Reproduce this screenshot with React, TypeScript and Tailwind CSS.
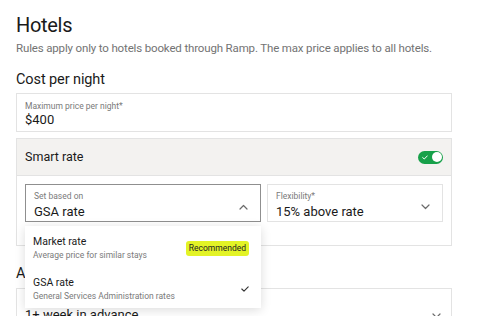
import React from "react";

const Chevron = ({ up = false }: { up?: boolean }) => (
  <svg width="9" height="6" viewBox="0 0 9 6" fill="none" className="text-[#6b6b6b]">
    <path
      d={up ? "M1 5 L4.5 1.5 L8 5" : "M1 1 L4.5 4.5 L8 1"}
      stroke="currentColor"
      strokeWidth="1.2"
      strokeLinecap="round"
      strokeLinejoin="round"
    />
  </svg>
);

const Check = () => (
  <svg width="8" height="6" viewBox="0 0 8 6" fill="none">
    <path d="M0.8 3 L3 5.2 L7.2 0.8" stroke="#333" strokeWidth="1.1" strokeLinecap="round" strokeLinejoin="round" />
  </svg>
);

export default function App() {
  return (
    <div className="w-[480px] h-[316px] overflow-hidden bg-white font-['Roboto',sans-serif] text-[#1a1a1a]">
      <div className="pl-4 pr-[28px] pt-[13px]">
        <h1 className="text-[20px] leading-6 font-normal tracking-[-0.3px]">Hotels</h1>
        <p className="mt-[3px] text-[11.5px] leading-4 text-[#737373] tracking-[-0.15px] whitespace-nowrap">
          Rules apply only to hotels booked through Ramp. The max price applies to all hotels.
        </p>
        <h2 className="mt-[14px] text-[14.5px] leading-5 tracking-[-0.1px]">Cost per night</h2>

        {/* max price */}
        <div className="mt-[3px] h-[39px] border border-[#e3e3e3] px-[8px] pt-[6px]">
          <div className="text-[8.5px] leading-3 text-[#7a7a7a]">Maximum price per night*</div>
          <div className="text-[13px] leading-4">$400</div>
        </div>

        {/* smart rate */}
        <div className="mt-[6px] border border-[#e3e3e3]">
          <div className="h-[37px] bg-[#f3f2f0] border-b border-[#e3e3e3] flex items-center justify-between pl-[8px] pr-[8px]">
            <span className="text-[12.5px]">Smart rate</span>
            <div className="w-[25px] h-[13px] rounded-full bg-[#17a14a] flex items-center justify-between pl-[4px] pr-[1.5px]">
              <svg width="6" height="5" viewBox="0 0 6 5" fill="none">
                <path d="M0.7 2.6 L2.3 4 L5.3 0.9" stroke="white" strokeWidth="1" strokeLinecap="round" strokeLinejoin="round" />
              </svg>
              <div className="w-[10px] h-[10px] rounded-full bg-white" />
            </div>
          </div>
          <div className="flex gap-[6px] pl-[8px] pr-[8px] pt-[8px] pb-[23px]">
            <div className="relative w-[236px]">
              <div className="h-[38px] border border-[#8f8f8f] px-[8px] pt-[5px] flex items-start justify-between">
                <div>
                  <div className="text-[8.5px] leading-3 text-[#7a7a7a]">Set based on</div>
                  <div className="text-[13px] leading-4 mt-[2px]">GSA rate</div>
                </div>
                <div className="pt-[14px] pr-[4px]">
                  <Chevron up />
                </div>
              </div>
              {/* dropdown */}
              <div className="absolute left-0 top-[42px] w-[236px] h-[82px] pt-[3px] bg-white shadow-[0_2px_10px_rgba(0,0,0,0.14)] z-10 flex flex-col gap-[2px]">
                <div className="flex items-center justify-between pl-[8px] pr-[12px] h-[39px]">
                  <div>
                    <div className="text-[10.5px] leading-[14px]">Market rate</div>
                    <div className="text-[8.5px] leading-3 text-[#7a7a7a]">Average price for similar stays</div>
                  </div>
                  <span className="bg-[#e3f326] rounded-[3px] px-[3px] h-[15px] flex items-center text-[8.5px] text-[#222]">
                    Recommended
                  </span>
                </div>
                <div className="flex items-center justify-between pl-[8px] pr-[12px] h-[39px]">
                  <div>
                    <div className="text-[10.5px] leading-[14px]">GSA rate</div>
                    <div className="text-[8.5px] leading-3 text-[#7a7a7a]">General Services Administration rates</div>
                  </div>
                  <Check />
                </div>
              </div>
            </div>
            <div className="flex-1 h-[38px] border border-[#e3e3e3] px-[8px] pt-[5px] flex items-start justify-between">
              <div>
                <div className="text-[8.5px] leading-3 text-[#7a7a7a]">Flexibility*</div>
                <div className="text-[13px] leading-4 mt-[2px]">15% above rate</div>
              </div>
              <div className="pt-[14px] pr-[4px]">
                <Chevron />
              </div>
            </div>
          </div>
        </div>

        <h2 className="mt-[18px] text-[14.5px] leading-5 tracking-[-0.1px]">Advance booking</h2>
        <div className="mt-[4px] h-[39px] border border-[#e3e3e3] pl-[8px] pr-[10px] pt-[5px] flex items-start justify-between">
          <div>
            <div className="text-[8.5px] leading-3 text-[#7a7a7a]">Book at least*</div>
            <div className="text-[13px] leading-4 mt-[1px]">1+ week in advance</div>
          </div>
          <div className="pt-[19px]">
            <Chevron />
          </div>
        </div>
      </div>
    </div>
  );
}
